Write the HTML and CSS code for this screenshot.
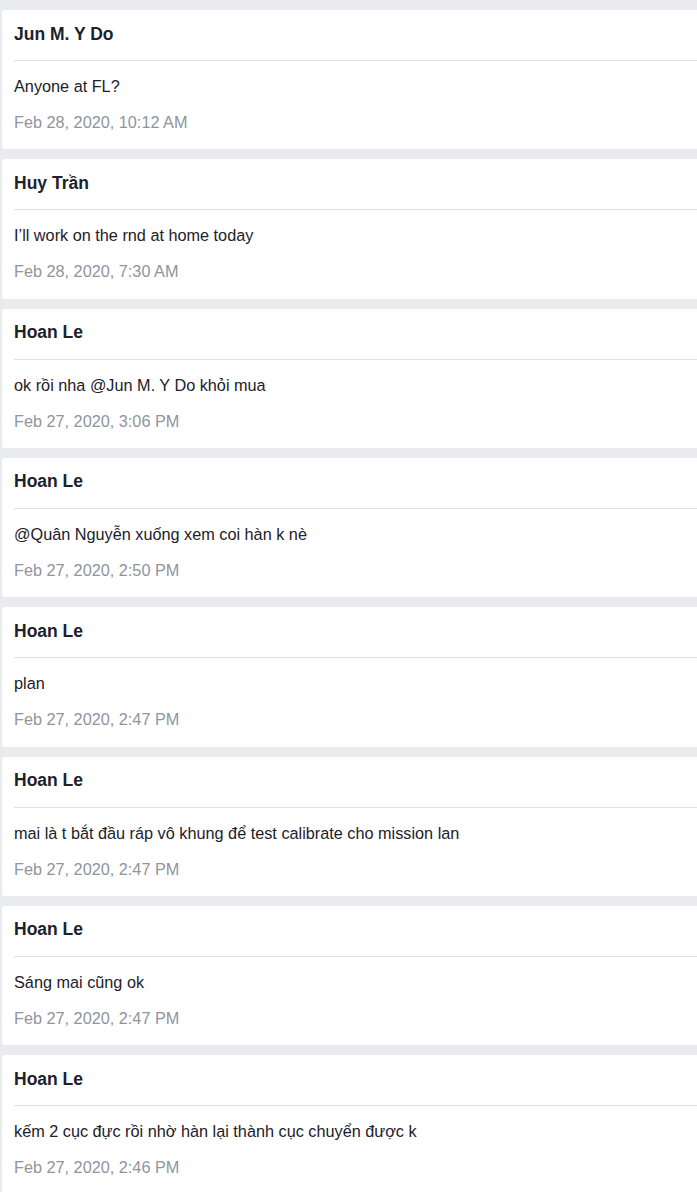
FILE: index.html
```html
<!DOCTYPE html>
<html>
<head>
<meta charset="utf-8">
<link rel="stylesheet" href="styles.css">
</head>
<body>
<div class="feed">
  <div class="card"><div class="card-head">Jun M. Y Do</div><div class="card-body"><div class="msg">Anyone at FL?</div><div class="date">Feb 28, 2020, 10:12 AM</div></div></div>
  <div class="card"><div class="card-head">Huy Trần</div><div class="card-body"><div class="msg">I’ll work on the rnd at home today</div><div class="date">Feb 28, 2020, 7:30 AM</div></div></div>
  <div class="card"><div class="card-head">Hoan Le</div><div class="card-body"><div class="msg">ok rồi nha @Jun M. Y Do khỏi mua</div><div class="date">Feb 27, 2020, 3:06 PM</div></div></div>
  <div class="card"><div class="card-head">Hoan Le</div><div class="card-body"><div class="msg">@Quân Nguyễn xuống xem coi hàn k nè</div><div class="date">Feb 27, 2020, 2:50 PM</div></div></div>
  <div class="card"><div class="card-head">Hoan Le</div><div class="card-body"><div class="msg">plan</div><div class="date">Feb 27, 2020, 2:47 PM</div></div></div>
  <div class="card"><div class="card-head">Hoan Le</div><div class="card-body"><div class="msg">mai là t bắt đầu ráp vô khung để test calibrate cho mission lan</div><div class="date">Feb 27, 2020, 2:47 PM</div></div></div>
  <div class="card"><div class="card-head">Hoan Le</div><div class="card-body"><div class="msg">Sáng mai cũng ok</div><div class="date">Feb 27, 2020, 2:47 PM</div></div></div>
  <div class="card"><div class="card-head">Hoan Le</div><div class="card-body"><div class="msg">kếm 2 cục đực rồi nhờ hàn lại thành cục chuyển được k</div><div class="date">Feb 27, 2020, 2:46 PM</div></div></div>
</div>
</body>
</html>
```

FILE: styles.css
```css
html, body {
  margin: 0;
  padding: 0;
  background: #e9ebee;
  overflow: hidden;
}
body {
  font-family: "Liberation Sans", Arial, sans-serif;
  color: #1d2129;
}
.feed {
  display: flex;
  flex-direction: column;
  gap: 10px;
  padding: 10px 0 0 2px;
  margin-right: -12px;
}
.card {
  background: #fff;
  border-radius: 3px;
  padding-left: 12px;
}
.card-head {
  display: flex;
  align-items: center;
  font-size: 17.5px;
  font-weight: bold;
  border-bottom: 1px solid #dddfe2;
  padding-bottom: 2px;
  box-sizing: border-box;
  height: 51px;
}
.card-body {
  padding: 15px 12px 17.33px 0;
}
.msg {
  font-size: 16.25px;
  line-height: 20px;
  margin-bottom: 16px;
  white-space: nowrap;
}
.date {
  font-size: 16.25px;
  line-height: 20px;
  color: #90949c;
}
```
